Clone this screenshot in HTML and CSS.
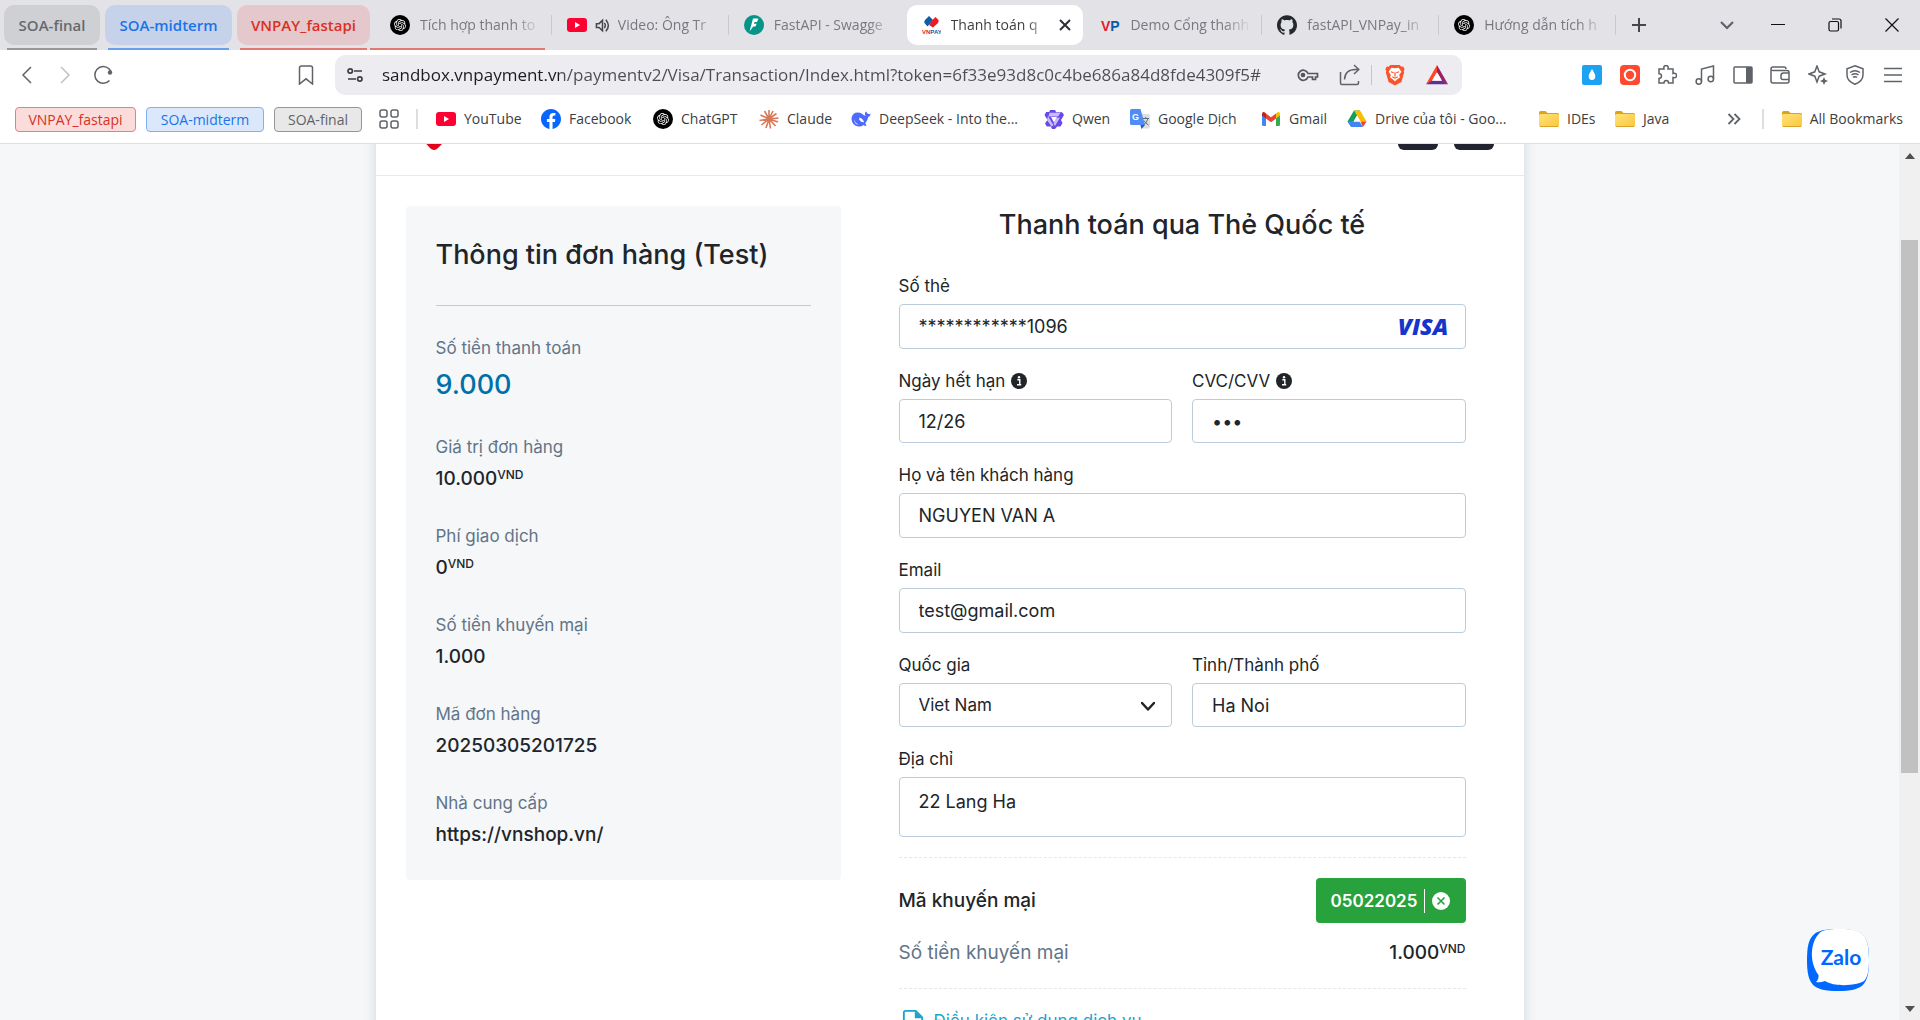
FILE: index.html
```html
<!DOCTYPE html>
<html lang="vi">
<head>
<meta charset="utf-8">
<title>Thanh toán qua Thẻ Quốc tế</title>
<link rel="stylesheet" href="styles.css">
</head>
<body>
<svg class="defs" aria-hidden="true">
  <symbol id="gpt" viewBox="0 0 40 40"><circle cx="20" cy="20" r="20" fill="#000"/><path transform="translate(8 8)" fill="#fff" d="M22.2819 9.8211a5.9847 5.9847 0 0 0-.5157-4.9108 6.0462 6.0462 0 0 0-6.5098-2.9A6.0651 6.0651 0 0 0 4.9807 4.1818a5.9847 5.9847 0 0 0-3.9977 2.9 6.0462 6.0462 0 0 0 .7427 7.0966 5.98 5.98 0 0 0 .511 4.9107 6.051 6.051 0 0 0 6.5146 2.9001A5.9847 5.9847 0 0 0 13.2599 24a6.0557 6.0557 0 0 0 5.7718-4.2058 5.9894 5.9894 0 0 0 3.9977-2.9001 6.0557 6.0557 0 0 0-.7475-7.0729zm-9.022 12.6081a4.4755 4.4755 0 0 1-2.8764-1.0408l.1419-.0804 4.7783-2.7582a.7948.7948 0 0 0 .3927-.6813v-6.7369l2.02 1.1686a.071.071 0 0 1 .038.052v5.5826a4.504 4.504 0 0 1-4.4945 4.4944zm-9.6607-4.1254a4.4708 4.4708 0 0 1-.5346-3.0137l.142.0852 4.783 2.7582a.7712.7712 0 0 0 .7806 0l5.8428-3.3685v2.3324a.0804.0804 0 0 1-.0332.0615L9.74 19.9502a4.4992 4.4992 0 0 1-6.1408-1.6464zM2.3408 7.8956a4.485 4.485 0 0 1 2.3655-1.9728V11.6a.7664.7664 0 0 0 .3879.6765l5.8144 3.3543-2.0201 1.1685a.0757.0757 0 0 1-.071 0l-4.8303-2.7865A4.504 4.504 0 0 1 2.3408 7.872zm16.5963 3.8558L13.1038 8.364 15.1192 7.2a.0757.0757 0 0 1 .071 0l4.8303 2.7913a4.4944 4.4944 0 0 1-.6765 8.1042v-5.6772a.79.79 0 0 0-.407-.667zm2.0107-3.0231l-.142-.0852-4.7735-2.7818a.7759.7759 0 0 0-.7854 0L9.409 9.2297V6.8974a.0662.0662 0 0 1 .0284-.0615l4.8303-2.7866a4.4992 4.4992 0 0 1 6.6802 4.66zM8.3065 12.863l-2.02-1.1638a.0804.0804 0 0 1-.038-.0567V6.0742a4.4992 4.4992 0 0 1 7.3757-3.4537l-.142.0805L8.704 5.459a.7948.7948 0 0 0-.3927.6813zm1.0976-2.3654l2.602-1.4998 2.6069 1.4998v2.9994l-2.5974 1.4997-2.6067-1.4997Z"/></symbol>
  <symbol id="youtube" viewBox="0 0 20 20"><rect y="3" width="20" height="14" rx="3" fill="#ff0033"/><path d="M8 7l5 3-5 3z" fill="#fff"/></symbol>
  <symbol id="folder" viewBox="0 0 20 20"><path d="M0 3.500q0-1.500 1.500-1.500h5l2 2h10q1.500 0 1.500 1.500v2H0z" fill="#dfa21b"/><rect y="5" width="20" height="13" rx="1.500" fill="url(#fold)"/><path d="M1 17.500h18" stroke="#d9a32a"/></symbol>
  <linearGradient id="fold" x1="0" y1="0" x2="1" y2="1"><stop offset="0" stop-color="#ffe27a"/><stop offset="1" stop-color="#fbc63d"/></linearGradient>
  <symbol id="info" viewBox="0 0 16 16"><circle cx="8" cy="8" r="8" fill="#212529"/><path d="M6.300 6.800h2.500v4.700M6 11.700h4.200" fill="none" stroke="#fff" stroke-width="1.400"/><circle cx="8" cy="4.200" r="1.200" fill="#fff"/></symbol>
</svg>

<header class="browser">
  <div class="tabstrip">
    <div class="groups">
      <button class="group gray">SOA-final</button>
      <button class="group blue">SOA-midterm</button>
      <button class="group red">VNPAY_fastapi</button>
    </div>
    <div class="tabs">
      <div class="tab grouped"><svg class="ico"><use href="#gpt"/></svg><button class="title">Tích hợp thanh to</button></div>
      <div class="tab"><svg class="ico"><use href="#youtube"/></svg><svg class="speaker" viewBox="0 0 16 16" fill="none" stroke="#45474b" stroke-width="1.600"><path d="M1.500 6v4h2.800L8 13.500v-11L4.300 6z"/><path d="M10 5.200q2 2.800 0 5.600M11.500 1.800q5.500 6.200 0 12.400"/></svg><button class="title">Video: Ông Tr</button></div>
      <div class="tab"><svg class="ico" viewBox="0 0 20 20"><circle cx="10" cy="10" r="10" fill="#059487"/><path d="M9 3.500h5.500L13 7h-2.500l-.6 1.700h2.800l-1.300 2.800H9.200L5.500 16.500z" fill="#fff"/></svg><button class="title">FastAPI - Swagge</button></div>
      <div class="tab active"><svg class="ico" viewBox="0 0 20 20"><path d="M4.500 4.500L8 1l4 4-5.500 6.500-3-3.500q-1-2 1-3.500z" fill="#0b5cab"/><path d="M11 5.500L14.500 2l3 3q.5 2-1 3.500L12 12.500 8 10z" fill="#ed1c24"/><text x="1" y="19" font-family="Liberation Sans" font-weight="bold" font-size="6" fill="#ed1c24">VN<tspan fill="#0b5cab">PAY</tspan></text></svg><button class="title">Thanh toán q</button><button class="close" aria-label="Close tab"><svg viewBox="0 0 12 12"><path d="M1 1l10 10M11 1L1 11" stroke="#2e3034" stroke-width="2"/></svg></button></div>
      <div class="tab"><svg class="ico" viewBox="0 0 20 20"><text x="1" y="16" font-family="Liberation Sans" font-weight="bold" font-size="14" fill="#e51c2a">V<tspan fill="#0c5aa6">P</tspan></text></svg><button class="title">Demo Cổng thanh</button></div>
      <div class="tab"><svg class="ico" viewBox="0 0 24 24"><path fill="#24292f" d="M12 .297c-6.630 0-12 5.373-12 12 0 5.303 3.438 9.800 8.205 11.385.6.113.82-.258.82-.577 0-.285-.010-1.040-.015-2.040-3.338.724-4.042-1.610-4.042-1.610C4.422 18.070 3.633 17.700 3.633 17.700c-1.087-.744.084-.729.084-.729 1.205.084 1.838 1.236 1.838 1.236 1.070 1.835 2.809 1.305 3.495.998.108-.776.417-1.305.76-1.605-2.665-.3-5.466-1.332-5.466-5.930 0-1.310.465-2.380 1.235-3.220-.135-.303-.54-1.523.105-3.176 0 0 1.005-.322 3.300 1.230.96-.267 1.980-.399 3-.405 1.020.006 2.040.138 3 .405 2.280-1.552 3.285-1.230 3.285-1.230.645 1.653.24 2.873.12 3.176.765.84 1.230 1.910 1.230 3.220 0 4.610-2.805 5.625-5.475 5.920.42.36.81 1.096.81 2.220 0 1.606-.015 2.896-.015 3.286 0 .315.21.69.825.57C20.565 22.092 24 17.592 24 12.297c0-6.627-5.373-12-12-12"/></svg><button class="title">fastAPI_VNPay_in</button></div>
      <div class="tab"><svg class="ico"><use href="#gpt"/></svg><button class="title">Hướng dẫn tích h</button></div>
    </div>
    <div class="window">
      <button class="new" aria-label="New tab"><svg viewBox="0 0 14 14"><path d="M7 0v14M0 7h14" stroke="#45474b" stroke-width="2"/></svg></button>
      <button class="search" aria-label="Search tabs"><svg viewBox="0 0 14 14"><path d="M1 4l6 6 6-6" stroke="#5f6368" stroke-width="2.200" fill="none"/></svg></button>
      <button aria-label="Minimize"><svg viewBox="0 0 14 14"><path d="M0 6.500h14" stroke="#111"/></svg></button>
      <button aria-label="Restore"><svg viewBox="0 0 14 14" fill="none" stroke="#111" stroke-width="1.200"><rect x="1" y="3.500" width="9.500" height="9.500" rx="1.500"/><path d="M4 1h7q2 0 2 2v7.500"/></svg></button>
      <button class="quit" aria-label="Close"><svg viewBox="0 0 14 14"><path d="M.5.5l13 13M13.500.5l-13 13" stroke="#111" stroke-width="1.200"/></svg></button>
    </div>
  </div>

  <div class="toolbar">
    <div class="nav">
      <button aria-label="Back"><svg viewBox="0 0 20 20"><path d="M14 2l-8 8 8 8" class="line"/></svg></button>
      <button aria-label="Forward"><svg viewBox="0 0 20 20"><path d="M6 2l8 8-8 8" fill="none" stroke="#bfc1c5" stroke-width="1.500"/></svg></button>
      <button aria-label="Reload"><svg viewBox="0 0 20 20"><path d="M16.500 15.500A8.400 8.400 0 1 1 16 3.800L18 6.500" class="line"/><circle cx="17" cy="7.500" r="2.200" fill="#5f6368"/></svg></button>
    </div>
    <button class="save" aria-label="Bookmark"><svg viewBox="0 0 20 20"><path d="M3.500 19V3q0-2 2-2h9q2 0 2 2v16L10 13.800z" class="line"/></svg></button>
    <div class="omnibox">
      <svg class="site" viewBox="0 0 16 16" fill="none" stroke="#3c3e42" stroke-width="1.700"><circle cx="3.200" cy="4" r="2.200"/><path d="M7 4h8M1 12h8"/><circle cx="12.800" cy="12" r="2.200"/></svg>
      <input class="url" type="text" aria-label="Address" value="sandbox.vnpayment.vn/paymentv2/Visa/Transaction/Index.html?token=6f33e93d8c0c4be686a84d8fde4309f5#">
      <button aria-label="Passwords"><svg viewBox="0 0 22 22" fill="none" stroke="#55575c" stroke-width="1.700"><path d="M11 9.500a5 5 0 1 0 0 3.500h4.500v2.500h3V13h2V9.500z"/><circle cx="6" cy="11" r="1.500" fill="#55575c"/></svg></button>
      <button aria-label="Share"><svg viewBox="0 0 22 22"><path d="M1.500 8v11q0 1.500 1.500 1.500h15q1.500 0 1.500-1.500v-2M5.500 15.500q.5-10 11-10h3M15 1l4.800 4.500L15 10" class="line"/></svg></button>
      <i class="rule"></i>
      <button aria-label="Shields"><svg viewBox="0 0 22 24"><path d="M6 1h10l2 2 2-.3 1.500 3-1 2 .5 1.500-3 10.500L11 23.500 4 19.700 1 9.200l.5-1.500-1-2L2 2.700 4 3z" fill="#fb542b"/><path d="M11 4.500l4-.5 3 4.500-2.500 3.500 1 2.500-4 3L11 19l-1.500-1.500-4-3 1-2.500L4 8.500 7 4z" fill="#fff"/><path d="M6.500 8.500l3 1M15.500 8.500l-3 1M8 14l3 1.500 3-1.500M11 9v4.500" stroke="#fb542b" stroke-width="1.300" fill="none"/></svg></button>
      <button aria-label="Rewards"><svg viewBox="0 0 24 22"><path d="M12 0L0 21l6.500-3.500L12 8z" fill="#ff4724"/><path d="M12 0l12 21-6.500-3.500L12 8z" fill="#9e1f63"/><path d="M0 21h24l-6.500-4h-11z" fill="#662d91"/><path d="M12 8l5.500 9.200h-11z" fill="#fff"/></svg></button>
    </div>
    <div class="tools">
      <button aria-label="Drop"><svg viewBox="0 0 20 20"><rect width="20" height="20" rx="2" fill="#1da1f2"/><path d="M10 4q3.300 5 3.300 7.500a3.300 3.500 0 0 1-6.600 0Q6.700 9 10 4z" fill="#fff"/></svg></button>
      <button aria-label="Recorder"><svg viewBox="0 0 20 20"><rect width="20" height="20" rx="4" fill="#ff4a30"/><circle cx="10" cy="10" r="5.200" fill="none" stroke="#fff" stroke-width="2"/></svg></button>
      <button aria-label="Extensions"><svg viewBox="0 0 20 20"><path d="M2 4h5q-.8-3.500 2-3.500T11 4h5v4.500q3.500-.8 3.500 2t-3.500 2V18h-4.500q0-2.500-2.200-2.500T7 18H2v-4.500q2.500-.3 2.500-2.500T2 8.800z" class="line"/></svg></button>
      <button aria-label="Playlist"><svg viewBox="0 0 20 20"><path d="M6.500 16.500V4L18.500 1v13" class="line"/><circle cx="3.800" cy="16.500" r="2.700" class="line"/><circle cx="15.800" cy="14" r="2.700" class="line"/></svg></button>
      <button aria-label="Sidebar"><svg viewBox="0 0 20 20"><rect x="1" y="2" width="18" height="16" rx="1" class="line"/><path d="M13 2h6v16h-6z" fill="#5f6368"/></svg></button>
      <button aria-label="Wallet"><svg viewBox="0 0 20 20"><path d="M1 4v12q0 2 2 2h14q2 0 2-2v-1M1 4q0-2 2-2h11q2 0 2 2M1 4.500q0 1 2 1h14q2 0 2 2M19 8h-5.500q-2.500 0-2.500 2.500v2q0 2 2 2h6z" class="line"/></svg></button>
      <button aria-label="Assistant"><svg viewBox="0 0 20 20"><path d="M9 1l2.200 5.800L17 9l-5.800 2.200L9 17l-2.200-5.800L1 9l5.800-2.200z" class="line"/><path d="M16 12l1.200 2.800L20 16l-2.800 1.200L16 20l-1.200-2.800L12 16l2.800-1.200z" fill="#5f6368"/></svg></button>
      <button aria-label="VPN"><svg viewBox="0 0 20 20"><path d="M10 .8l8 3V10q0 6-8 9.300Q2 16 2 10V3.800z" class="line"/><path d="M5 7.500q5-3.500 10 0M6.500 10q3.500-2.400 7 0M8 12.300q2-1.300 4 0" class="line"/></svg></button>
      <button aria-label="Menu"><svg viewBox="0 0 20 20"><path d="M1 3.500h18M1 10h18M1 16.500h18" class="line"/></svg></button>
    </div>
  </div>

  <nav class="bookmarks">
    <div class="chips">
      <button class="chip red">VNPAY_fastapi</button>
      <button class="chip blue">SOA-midterm</button>
      <button class="chip gray">SOA-final</button>
    </div>
    <button class="grid" aria-label="Tab groups"><svg viewBox="0 0 20 20" class="line"><rect x="1" y="1" width="7" height="7" rx="2"/><rect x="12" y="1" width="7" height="7" rx="2"/><rect x="1" y="12" width="7" height="7" rx="2"/><rect x="12" y="12" width="7" height="7" rx="2"/></svg></button>
    <i class="bar"></i>
    <div class="links">
      <a href="#"><svg class="ico"><use href="#youtube"/></svg>YouTube</a>
      <a href="#"><svg class="ico" viewBox="0 0 24 24"><path fill="#0866ff" d="M24 12.073c0-6.627-5.373-12-12-12s-12 5.373-12 12c0 5.990 4.388 10.954 10.125 11.854v-8.385H7.078v-3.470h3.047V9.430c0-3.007 1.792-4.669 4.533-4.669 1.312 0 2.686.235 2.686.235v2.953H15.830c-1.491 0-1.956.925-1.956 1.874v2.250h3.328l-.532 3.470h-2.796v8.385C19.612 23.027 24 18.062 24 12.073z"/></svg>Facebook</a>
      <a href="#"><svg class="ico"><use href="#gpt"/></svg>ChatGPT</a>
      <a href="#"><svg class="ico" viewBox="0 0 20 20"><path d="M10 10V1M10 10l4-8M10 10l7.500-5.500M10 10l9.500-1M10 10l9 3M10 10l6.500 7M10 10l1.500 9.500M10 10l-3 9M10 10l-7.500 6M10 10l-9.500 1.500M10 10L1.500 6M10 10L5.500 2" stroke="#d97757" stroke-width="1.600"/></svg>Claude</a>
      <a href="#"><svg class="ico" viewBox="0 0 20 20"><path d="M19.500 4.500q-1 .8-2 .5-1.500-.5-2.300-2.500-2.200 1.500-.7 4.300-1.500-.2-3.500-2Q8 2.800 4.500 3.800.5 5.500.5 10q.5 6.500 7 7.500 3 .3 5-1.500 1.500 1.300 3 1l-1.200-2.800q2.500-2.700 2.900-6.200 2.500-1 2.300-3.500z" fill="#4d6bfe"/><path d="M8.500 8.500q3.500 1 4.500 4.500-2 1-4.800-2.300zM3 10q1 4 4.500 5.500-4 0-4.500-5.500z" fill="#fff"/></svg>DeepSeek - Into the...</a>
      <a href="#"><svg class="ico" viewBox="0 0 20 20"><path d="M6 1h5l1.200 2.200h6L20 6l-3 5 1.500 3-2 3.500h-3.300L11 20H8l-1.200-2.500h-4L1 14.500 3.500 11 .5 6l1.700-3h3z" fill="#6848e8"/><path d="M5.500 3.800h11L14 7.500H4.500zM4 7l5.500 9.500-2 1L3 11zM16 8.500L11 17l-1.500-2.500L12.500 9z" fill="#c9bcfa"/><path d="M7 8h6l-3 5.500z" fill="#fff"/></svg>Qwen</a>
      <a href="#"><svg class="ico" viewBox="0 0 20 20"><path d="M7 5h11.500q1.500 0 1.500 1.500V18q0 1.500-1.500 1.500H11z" fill="#dcdfe3"/><path d="M1.500 0h9L15 16H1.500Q0 16 0 14.500v-13Q0 0 1.500 0z" fill="#4e8df5"/><path d="M10.500 16H15l-3.500 4z" fill="#2a56c6"/><text x="2" y="11" font-family="Liberation Sans" font-weight="bold" font-size="9" fill="#fff">G</text><path d="M12.500 9.500H19M15.700 8v1.500M18 9.500q-1 4-4.500 6.500M14 11.500q1.500 3 4.500 4.500" stroke="#60717f" fill="none"/></svg>Google Dịch</a>
      <a href="#"><svg class="ico" viewBox="0 0 20 20"><path d="M1 4.500v11q0 1.500 1.500 1.500H5V7z" fill="#4285f4"/><path d="M15 7v10h2.500q1.500 0 1.500-1.500v-11z" fill="#34a853"/><path d="M15 4.500l1.500-1.300Q19 2.500 19 5v1.500L15 9.500z" fill="#fbbc04"/><path d="M5 4.500L3.500 3.200Q1 2.500 1 5v1.500l4 3z" fill="#c5221f"/><path d="M5 4.500l5 3.800 5-3.800v5l-5 3.800-5-3.800z" fill="#ea4335"/></svg>Gmail</a>
      <a href="#"><svg class="ico" viewBox="0 0 20 20"><path d="M7 1.500h6L6.500 12.500 4 17 .5 12.500z" fill="#11a15c"/><path d="M7 1.500h6l6.500 11h-6z" fill="#fbbc04"/><path d="M.5 12.500h12L16 18H4z" fill="#4285f4"/><path d="M13.500 12.500h6L16 18z" fill="#ea4335"/><path d="M10 6.700l3.500 5.800H6.600z" fill="#fff"/></svg>Drive của tôi - Goo...</a>
      <a href="#"><svg class="ico"><use href="#folder"/></svg>IDEs</a>
      <a href="#"><svg class="ico"><use href="#folder"/></svg>Java</a>
    </div>
    <button class="more" aria-label="More bookmarks"><svg viewBox="0 0 14 14"><path d="M1.500 2l5 5-5 5M7.500 2l5 5-5 5" stroke="#5f6368" stroke-width="1.800" fill="none"/></svg></button>
    <i class="bar"></i>
    <a class="all" href="#"><svg class="ico"><use href="#folder"/></svg>All Bookmarks</a>
  </nav>
</header>

<div class="viewport">
  <main class="sheet">
    <div class="site-header">
      <svg class="logo" viewBox="0 0 60 40"><path d="M8 20L28 0l22 20-18 18q-4 4-8 0z" fill="#e50019"/></svg>
      <div class="langs"><button aria-label="Tiếng Việt"></button><button aria-label="English"></button></div>
    </div>
    <div class="columns">
      <section class="order">
        <h2>Thông tin đơn hàng (Test)</h2>
        <dl>
          <div><dt>Số tiền thanh toán</dt><dd class="total">9.000</dd></div>
          <div><dt>Giá trị đơn hàng</dt><dd>10.000<sup>VND</sup></dd></div>
          <div><dt>Phí giao dịch</dt><dd>0<sup>VND</sup></dd></div>
          <div><dt>Số tiền khuyến mại</dt><dd>1.000</dd></div>
          <div><dt>Mã đơn hàng</dt><dd>20250305201725</dd></div>
          <div><dt>Nhà cung cấp</dt><dd>https://vnshop.vn/</dd></div>
        </dl>
      </section>
      <form class="pay">
        <h1>Thanh toán qua Thẻ Quốc tế</h1>
        <div class="fields">
          <div class="field wide"><label for="card">Số thẻ</label><div class="control"><input id="card" type="text" value="************1096"><svg class="visa" viewBox="0 0 54 22" aria-label="Visa"><text x="27" y="19" text-anchor="middle" font-family="Open Sans" font-weight="800" font-style="italic" font-size="23" fill="#1434cb">VISA</text></svg></div></div>
          <div class="field half"><label for="exp">Ngày hết hạn <svg class="info"><use href="#info"/></svg></label><input id="exp" type="text" value="12/26"></div>
          <div class="field half"><label for="cvc">CVC/CVV <svg class="info"><use href="#info"/></svg></label><input id="cvc" type="password" value="123"></div>
          <div class="field wide"><label for="name">Họ và tên khách hàng</label><input id="name" type="text" value="NGUYEN VAN A"></div>
          <div class="field wide"><label for="email">Email</label><input id="email" type="email" value="test@gmail.com"></div>
          <div class="field half"><label for="country">Quốc gia</label><div class="control"><select id="country"><option>Viet Nam</option></select><svg class="arrow" viewBox="0 0 14 14"><path d="M1 4l6 6.500L13 4" fill="none" stroke="#212529" stroke-width="2.500" stroke-linecap="round" stroke-linejoin="round"/></svg></div></div>
          <div class="field half"><label for="city">Tỉnh/Thành phố</label><input id="city" type="text" value="Ha Noi"></div>
          <div class="field wide"><label for="address">Địa chỉ</label><textarea id="address">22 Lang Ha</textarea></div>
        </div>
        <div class="promo">
          <div class="line-item"><strong>Mã khuyến mại</strong><button type="button" class="coupon">05022025<i></i><svg viewBox="0 0 18 18"><circle cx="9" cy="9" r="9" fill="#fff"/><path d="M5.500 5.500l7 7M12.500 5.500l-7 7" stroke="#28a23c" stroke-width="1.600"/></svg></button></div>
          <div class="line-item"><span>Số tiền khuyến mại</span><b>1.000<sup>VND</sup></b></div>
        </div>
        <a class="terms" href="#"><svg viewBox="0 0 24 24"><path d="M2 23V3q0-2 2-2h11l7 7v15z" fill="none" stroke="#1ba3cc" stroke-width="2"/><path d="M14 1l8 8h-8z" fill="#1ba3cc"/></svg>Điều kiện sử dụng dịch vụ</a>
      </form>
    </div>
  </main>
  <button class="zalo" aria-label="Zalo"><svg viewBox="0 0 62 62"><path d="M31 0c25 0 31 6 31 31s-6 31-31 31S0 56 0 31 6 0 31 0z" fill="#0068ff"/><path d="M34 0c22 0 28 6 28 31 0 12-2 18-5 21-8 5-30 6-39 0q-5 2-9 1 3-3 2.500-7C2 33 3 13 13 3.500 18 0 25 0 34 0z" fill="#fff"/><text x="34" y="36" text-anchor="middle" font-family="Lato" font-weight="bold" font-size="21" fill="#0068ff">Zalo</text></svg></button>
  <div class="scrollbar"><svg viewBox="0 0 10 6"><path d="M0 6l5-6 5 6z" fill="#505050"/></svg><i></i><svg viewBox="0 0 10 6"><path d="M0 0l5 6 5-6z" fill="#505050"/></svg></div>
</div>
</body>
</html>
```
FILE: styles.css
```css
* { box-sizing: border-box; }
body { margin: 0; height: 100vh; display: flex; flex-direction: column; overflow: hidden; font-family: Inter, "Liberation Sans", sans-serif; color: #212529; background: #fff; }
button { margin: 0; padding: 0; border: 0; background: none; font: inherit; color: inherit; }
a { color: inherit; text-decoration: none; }
h1, h2, dl, dd { margin: 0; }
svg { display: block; flex: none; }
.defs { position: absolute; width: 0; height: 0; }
.line { fill: none; stroke: #5f6368; stroke-width: 1.5; }
.ico { width: 20px; height: 20px; }

/* browser frame */
.browser { flex: none; font-family: "Open Sans", "Noto Sans", sans-serif; font-size: 14px; color: #3c3e42; border-bottom: 1px solid #dfe0e3; }
.tabstrip { display: flex; height: 50px; background: #e3e2e7; }
.groups { display: flex; flex: none; gap: 5px; padding: 5px 0 5px 4px; }
.group { height: 40px; border-radius: 10px; font-size: 15px; font-weight: 600; position: relative; }
.group::after { content: ""; position: absolute; left: 3px; right: 3px; bottom: -5px; height: 2px; }
.group.gray { width: 96px; background: #cfd0d4; color: #66696e; }
.group.blue { width: 127px; background: #c5d2ea; color: #1a73e8; }
.group.red { width: 133px; background: #e4c8cc; color: #d93025; }
.group.gray::after { background: #97989b; }
.group.blue::after { background: #68a0ee; }
.group.red::after { background: #e27870; }
.tabs { display: flex; flex: 1; min-width: 0; padding: 5px 0 5px 6px; }
.tab { flex: 1 1 0; min-width: 0; display: flex; align-items: center; gap: 10px; padding: 0 12px 0 14px; border-radius: 10px; position: relative; color: #77797e; }
.tab::after { content: ""; position: absolute; right: 1px; top: 10px; width: 1px; height: 20px; background: #c9cace; }
.tab.active::after, .tab:nth-child(3)::after { display: none; }
.tab.grouped::before { content: ""; position: absolute; left: -6px; right: 8px; bottom: -5px; height: 2px; background: #e27870; }
.tab .title { flex: 1; min-width: 0; overflow: hidden; white-space: nowrap; text-align: left; line-height: 24px; mask-image: linear-gradient(90deg, #000 78%, transparent); }
.tab.active { margin-right: 3px; background: #fff; color: #3c3e42; }
.speaker { width: 15px; height: 15px; margin: 0 -2px; }
.close svg { width: 12px; height: 12px; }
.window { display: flex; flex: none; align-items: center; padding-left: 15px; }
.window button { width: 57px; }
.window .new { width: 88px; }
.window .search { width: 51px; }
.window .quit { width: 35px; }
.window svg { width: 14px; height: 14px; }

.toolbar { display: flex; align-items: center; height: 50px; }
.toolbar svg { width: 20px; height: 20px; }
.nav { display: flex; gap: 18px; width: 296px; padding-left: 17px; }
.save { margin-right: 19px; }
.omnibox { flex: 1; display: flex; align-items: center; height: 40px; padding: 0 14px 0 12px; border-radius: 10px; background: #edecf1; }
.omnibox .site { width: 16px; height: 16px; }
.omnibox svg { width: 22px; height: 22px; }
.omnibox button { margin-left: 20px; }
.url { flex: 1; min-width: 0; padding: 0 0 0 19px; border: 0; outline: 0; font-family: inherit; font-size: 17px; line-height: 24px; color: transparent; background: linear-gradient(90deg, #1b1c1f 196px, #4b4d52 196px); background-clip: text; }
.rule { width: 1px; height: 20px; margin-left: 10px; background: #c4c5ca; }
.omnibox .rule + button { margin-left: 12px; }
.tools { display: flex; justify-content: space-between; width: 458px; padding: 0 17px 0 120px; }

.bookmarks { display: flex; align-items: center; height: 43px; padding: 0 17px 5px 15px; }
.chips { display: flex; gap: 10px; }
.chip { height: 25px; border: 1px solid; border-radius: 4px; font-weight: 500; }
.chip.red { width: 121px; color: #d93025; border-color: #e88078; background: #fadcdb; }
.chip.blue { width: 118px; color: #1a73e8; border-color: #7fb0f3; background: #dbe8fb; }
.chip.gray { width: 88px; color: #5f6368; border-color: #94969a; background: #e7e8e7; }
.grid { margin: 0 17px 0 17px; }
.grid svg { width: 20px; height: 20px; }
.bar { width: 2px; height: 20px; background: #dddde2; }
.links { display: grid; flex: 1; grid-template-columns: 105px 112px 106px 92px 193px 86px 131px 86px 192px 76px 1fr; margin-left: 18px; }
.links a, .all { display: flex; align-items: center; gap: 8px; white-space: nowrap; line-height: 24px; }
.more { margin-right: 21px; }
.more svg { width: 14px; height: 14px; }
.all { margin-left: 18px; }

/* page */
.viewport { flex: 1; min-height: 0; position: relative; overflow: hidden; padding-right: 21px; background: #f5f7f9; }
.sheet { width: 1148px; margin: -58px auto 0; background: #fff; box-shadow: 0 0 12px rgba(60, 80, 110, .2); }
.site-header { display: flex; justify-content: space-between; align-items: flex-end; height: 90px; padding: 0 30px 25px; border-bottom: 1px solid #e8eaed; }
.logo { width: 60px; height: 40px; }
.langs { display: flex; gap: 16px; }
.langs button { width: 40px; height: 40px; border-radius: 6px; background: #212430; }
.columns { display: flex; align-items: flex-start; gap: 58px; padding: 30px 58px 60px 30px; }
.order { width: 435px; padding: 30px; border-radius: 4px; background: #f5f7f9; }
h1, h2 { font-size: 27px; line-height: 38px; font-weight: 500; }
h2 { padding-bottom: 31px; border-bottom: 1px solid #bcccdc; }
dl { display: grid; gap: 30px; padding-top: 30px; }
dt { font-size: 17px; line-height: 24px; color: #627488; }
dd { margin-top: 5px; font-size: 19px; line-height: 30px; font-weight: 500; }
dd.total { font-size: 27px; line-height: 40px; color: #0070ab; }
sup { font-size: 12px; line-height: 0; vertical-align: 6px; }
.pay { flex: 1; min-width: 0; }
h1 { text-align: center; }
.fields { display: grid; grid-template-columns: 1fr 1fr; gap: 20px; margin-top: 30px; }
.field { display: grid; gap: 6px; min-width: 0; }
.wide { grid-column: span 2; }
.field label { display: flex; align-items: center; gap: 6px; font-size: 17px; line-height: 24px; }
.info { width: 16px; height: 16px; }
.control { display: grid; position: relative; }
.field input, .field select, .field textarea { width: 100%; height: 45px; padding: 0 19px; border: 1px solid #bcccdc; border-radius: 4px; outline: 0; background: #fff; font-family: inherit; font-size: 18px; line-height: 24px; color: #212529; appearance: none; }
.half input, .half select { height: 44px; }
.field select { font-size: 17px; }
.field textarea { display: block; height: 60px; padding: 12px 19px; resize: none; }
.visa { position: absolute; right: 16px; top: 12px; width: 54px; height: 22px; }
.arrow { position: absolute; right: 17px; top: 16px; width: 14px; height: 14px; }
.promo { display: grid; gap: 15px; margin-top: 20px; padding: 20px 0; border: dashed #e4e7eb; border-width: 1px 0; }
.line-item { display: flex; justify-content: space-between; align-items: center; font-size: 19px; line-height: 30px; color: #627488; }
.line-item strong, .line-item b { font-weight: 500; color: #212529; }
.coupon { display: flex; align-items: center; justify-content: center; gap: 7px; width: 150px; height: 45px; border-radius: 4px; background: #28a23c; color: #fff; font-size: 17px; font-weight: 600; }
.coupon i { width: 1px; height: 24px; background: #fff; }
.coupon svg { width: 18px; height: 18px; }
.terms { display: flex; gap: 10px; margin-top: 20px; padding-left: 3px; font-size: 17px; line-height: 24px; color: #1ba3cc; }
.terms svg { width: 22px; height: 24px; }
.zalo { position: absolute; right: 51px; bottom: 29px; }
.zalo svg { width: 62px; height: 62px; }
.scrollbar { position: absolute; inset: 0 0 0 auto; width: 21px; display: flex; flex-direction: column; align-items: center; padding: 9px 0 8px; background: #f0f0f0; }
.scrollbar i { width: 17px; height: 533px; margin: 81px 0 auto; background: #c1c1c1; }
.scrollbar svg { width: 10px; height: 6px; }
```
